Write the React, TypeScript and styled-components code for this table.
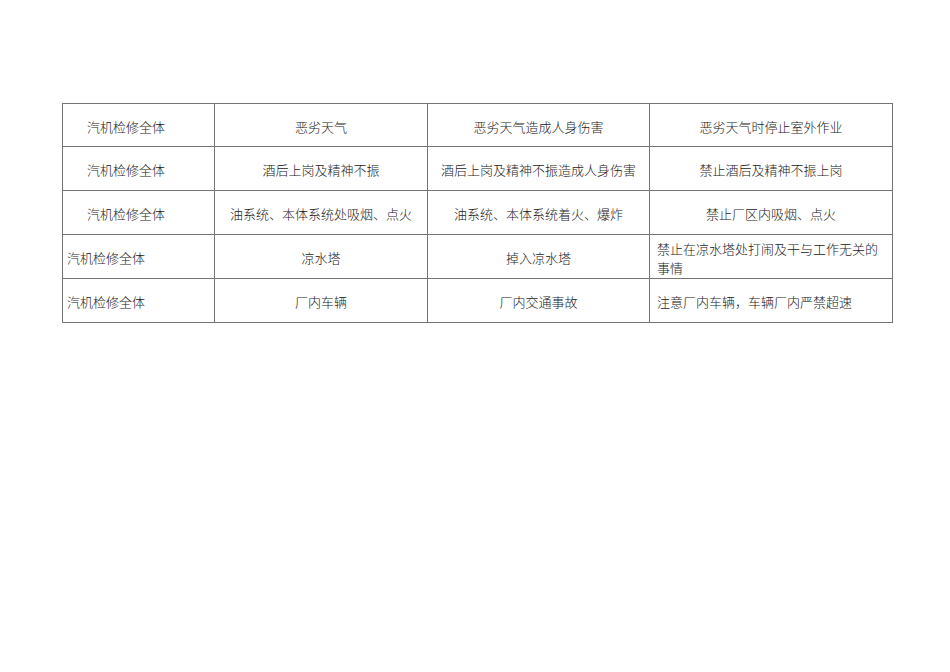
import styled, { createGlobalStyle } from "styled-components";

const GlobalStyle = createGlobalStyle`
  body {
    margin: 0;
    background: #ffffff;
    font-family: "Liberation Serif", "Noto Sans CJK SC", serif;
  }
`;

const Page = styled.div`
  width: 950px;
  height: 672px;
  padding: 103px 0 0 62px;
  box-sizing: border-box;
`;

const Table = styled.table`
  border-collapse: collapse;
  table-layout: fixed;
  width: 830px;
  color: #222222;
  font-family: "Noto Sans CJK SC", sans-serif;
  font-size: 13px;
  line-height: 19px;
`;

const Col = styled.col<{ $w: number }>`
  width: ${(p) => p.$w}px;
`;

const Row = styled.tr<{ $h: number }>`
  height: ${(p) => p.$h}px;
`;

const Cell = styled.td<{ $align?: "left" | "center"; $pad?: number }>`
  border: 1px solid #747474;
  text-align: ${(p) => p.$align ?? "center"};
  padding: 2px ${(p) => p.$pad ?? 7}px 0 ${(p) => p.$pad ?? 7}px;
  vertical-align: middle;
  font-weight: 300;
`;

type Risk = {
  who: string;
  whoIndent: number;
  source: string;
  harm: string;
  measure: string;
  measureLeft?: boolean;
};

const widths = [152, 213, 222, 243];

const risks: Risk[] = [
  { who: "汽机检修全体", whoIndent: 24, source: "恶劣天气", harm: "恶劣天气造成人身伤害", measure: "恶劣天气时停止室外作业" },
  { who: "汽机检修全体", whoIndent: 24, source: "酒后上岗及精神不振", harm: "酒后上岗及精神不振造成人身伤害", measure: "禁止酒后及精神不振上岗" },
  { who: "汽机检修全体", whoIndent: 24, source: "油系统、本体系统处吸烟、点火", harm: "油系统、本体系统着火、爆炸", measure: "禁止厂区内吸烟、点火" },
  { who: "汽机检修全体", whoIndent: 4, source: "凉水塔", harm: "掉入凉水塔", measure: "禁止在凉水塔处打闹及干与工作无关的事情", measureLeft: true },
  { who: "汽机检修全体", whoIndent: 4, source: "厂内车辆", harm: "厂内交通事故", measure: "注意厂内车辆，车辆厂内严禁超速", measureLeft: true },
];

export default function App() {
  return (
    <>
      <GlobalStyle />
      <Page>
        <Table>
          <colgroup>
            {widths.map((w, i) => (
              <Col key={i} $w={w} />
            ))}
          </colgroup>
          <tbody>
            {risks.map((r, i) => (
              <Row key={i} $h={i === 0 ? 43 : 44}>
                <Cell $align="left" $pad={r.whoIndent}>{r.who}</Cell>
                <Cell>{r.source}</Cell>
                <Cell $pad={4}>{r.harm}</Cell>
                <Cell $align={r.measureLeft ? "left" : "center"}>{r.measure}</Cell>
              </Row>
            ))}
          </tbody>
        </Table>
      </Page>
    </>
  );
}
